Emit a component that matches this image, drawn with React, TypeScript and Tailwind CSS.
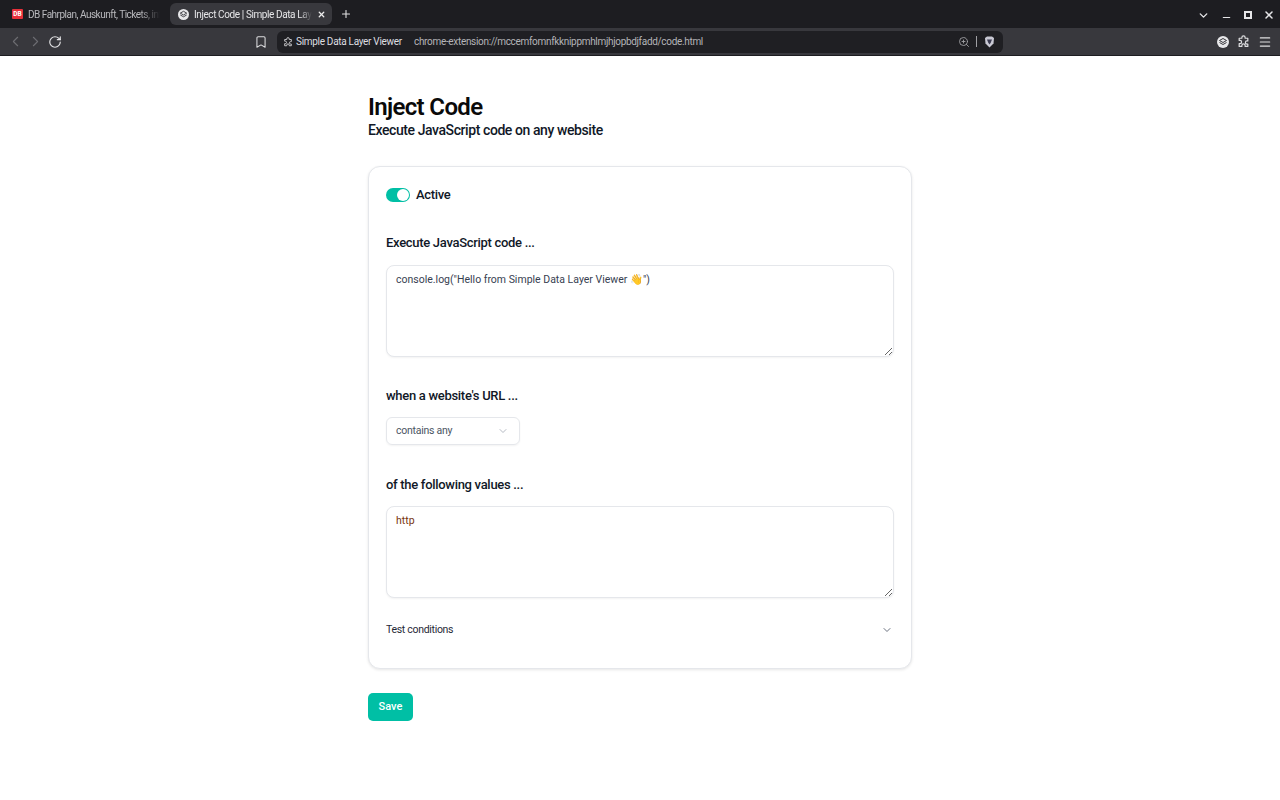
import { ChevronDown, ChevronLeft, ChevronRight, RotateCw, Bookmark, X, Plus, Minus, ZoomIn, Menu } from "lucide-react";

const font = { fontFamily: 'Roboto, "Noto Sans", sans-serif' };

function PuzzleIcon({ size, className = "" }: { size: number; className?: string }) {
  return (
    <svg width={size} height={size} viewBox="0 0 24 24" fill="none" stroke="currentColor" strokeWidth="2.2" strokeLinejoin="round" className={className}>
      <path d="M9 4.500a3 3 0 0 1 6 0V6h5v5h-1.500a3 3 0 0 0 0 6H20v4h-5v-1.500a3 3 0 0 0-6 0V21H4v-5h1.500a3 3 0 0 0 0-6H4V6h5z" />
    </svg>
  );
}

function LayerLogo({ size }: { size: number }) {
  return (
    <svg width={size} height={size} viewBox="0 0 24 24" className="shrink-0">
      <circle cx="12" cy="12" r="12" fill="#e8e8ea" />
      <path d="M12 5l7 4-7 4-7-4z" fill="none" stroke="#38383d" strokeWidth="2" strokeLinejoin="round" />
      <path d="M5 13l7 4 7-4" fill="none" stroke="#38383d" strokeWidth="2" strokeLinejoin="round" />
    </svg>
  );
}

function Tab() {
  return (
    <div className="flex h-[28px] w-[164px] shrink-0 items-center pl-[12px]">
      <div className="flex h-[10px] w-[11px] shrink-0 items-center justify-center rounded-[1px] bg-[#e8303a] text-[6.500px] leading-none font-bold text-white">DB</div>
      <span className="ml-[5px] w-[132px] overflow-hidden whitespace-nowrap text-[10px] tracking-[-0.5px] text-[#b9b9bd] [mask-image:linear-gradient(to_right,black_85%,transparent)]">DB Fahrplan, Auskunft, Tickets, informieren</span>
    </div>
  );
}

function ActiveTab() {
  return (
    <div className="mt-[3px] flex h-[22px] w-[162px] shrink-0 items-center rounded-[6px] bg-[#38383d] pl-[8px]">
      <LayerLogo size={11} />
      <span className="ml-[5px] w-[118px] overflow-hidden whitespace-nowrap text-[10px] tracking-[-0.4px] text-[#e6e6e8] [mask-image:linear-gradient(to_right,black_90%,transparent)]">Inject Code | Simple Data Layer Viewer</span>
      <X size={9} strokeWidth={3.5} className="ml-[5px] text-[#eeeeee]" />
    </div>
  );
}

function Heading({ children, className = "" }: { children: React.ReactNode; className?: string }) {
  return <h2 className={`text-[13px] leading-[18px] font-medium tracking-[-0.3px] text-[#111827] ${className}`}>{children}</h2>;
}

function Area({ value, color, className = "" }: { value: string; color: string; className?: string }) {
  return (
    <textarea
      readOnly
      defaultValue={value}
      style={font}
      className={`block h-[92px] w-full rounded-[8px] border border-[#e5e7eb] bg-white px-[9px] py-[6px] text-[10.500px] leading-[16px] shadow-[0_1px_2px_rgba(0,0,0,0.05)] outline-none ${color} ${className}`}
    />
  );
}

export default function App() {
  return (
    <div style={font} className="flex min-h-[800px] flex-col bg-white">
      <header className="flex h-[28px] items-start bg-[#1d1d21]">
        <Tab />
        <div className="w-[6px]" />
        <ActiveTab />
        <Plus size={12} strokeWidth={2.2} className="ml-[8px] mt-[8px] text-[#e0e0e2]" />
        <div className="ml-auto flex items-center pr-[5px] pt-[7px] text-[#e6e6e8]">
          <ChevronDown size={13} strokeWidth={2.5} />
          <Minus size={11} strokeWidth={2.5} className="ml-[11px] mt-[5px]" />
          <span className="ml-[12px] h-[8px] w-[8px] border-2 border-[#e6e6e8]" />
          <X size={12} strokeWidth={3} className="ml-[11px]" />
        </div>
      </header>
      <nav className="flex h-[28px] items-center border-b border-[#1d1d21] bg-[#38383d]">
        <ChevronLeft size={17} strokeWidth={1.5} className="ml-[7px] text-[#6d6d72]" />
        <ChevronRight size={17} strokeWidth={1.5} className="ml-[3px] text-[#6d6d72]" />
        <RotateCw size={14} strokeWidth={2} className="ml-[4px] text-[#e4e4e6]" />
        <Bookmark size={14} strokeWidth={1.8} className="ml-[192px] text-[#dcdcde]" />
        <div className="ml-[9px] flex h-[22px] w-[726px] items-center rounded-[6px] bg-[#1f1f23] pl-[6px] pr-[6px]">
          <PuzzleIcon size={10} className="shrink-0 text-[#d0d0d2]" />
          <span className="ml-[3px] w-[106px] shrink-0 whitespace-nowrap text-[10px] tracking-[-0.3px] text-[#dedee0]">Simple Data Layer Viewer</span>
          <span className="ml-[12px] whitespace-nowrap text-[10px] tracking-[-0.32px] text-[#b4b4b8]">chrome-extension://mccemfomnfkknippmhlmjhjopbdjfadd/code.html</span>
          <ZoomIn size={12} strokeWidth={1.8} className="ml-auto text-[#9f9fa3]" />
          <span className="ml-[6px] h-[11px] w-px bg-[#a0a0a4]" />
          <svg width="11" height="12" viewBox="0 0 11 12" className="ml-[7px] mr-[2px]">
            <path d="M1 2l2-1.500h5L10 2l-.5 5.500L5.500 11.500 1.500 7.500z" fill="#c9c9d4" />
            <path d="M3 3.500h5L6.800 6.500 5.500 8.500 4.200 6.500z" fill="#3a3a50" />
          </svg>
        </div>
        <div className="ml-auto flex items-center gap-[8px] pr-[8px] text-[#dedee0]">
          <LayerLogo size={12} />
          <PuzzleIcon size={13} />
          <Menu size={14} strokeWidth={2} />
        </div>
      </nav>

      <main className="mx-auto w-[544px] pt-[37px]">
        <h1 className="text-[24px] leading-[28px] font-semibold tracking-[-0.65px] text-[#0a0a0a]">Inject Code</h1>
        <p className="text-[14px] leading-[18px] font-medium tracking-[-0.42px] text-[#111827]">Execute JavaScript code on any website</p>

        <section className="mt-[27px] h-[503px] rounded-[12px] border border-[#e5e7eb] bg-white px-[17px] pt-[19px] shadow-[0_1px_3px_rgba(0,0,0,0.1)]">
          <div className="flex h-[18px] items-center">
            <span className="relative h-[14px] w-[24px] rounded-full bg-[#00bfa5]">
              <span className="absolute right-[1px] top-[1px] h-[12px] w-[12px] rounded-full bg-white" />
            </span>
            <span className="ml-[6px] text-[13px] font-medium tracking-[-0.33px] text-[#111827]">Active</span>
          </div>

          <Heading className="mt-[30px]">Execute JavaScript code ...</Heading>
          <Area className="mt-[13px]" value={'console.log("Hello from Simple Data Layer Viewer 👋")'} color="text-[#374151]" />

          <Heading className="mt-[30px]">when a website's URL ...</Heading>
          <div className="mt-[12px] flex h-[28px] w-[134px] items-center justify-between rounded-[6px] border border-[#e5e7eb] pl-[9px] pr-[10px] shadow-[0_1px_2px_rgba(0,0,0,0.05)]">
            <span className="text-[10.500px] tracking-[-0.25px] text-[#4b5563]">contains any</span>
            <ChevronDown size={12} strokeWidth={1.5} className="text-[#9ca3af]" />
          </div>

          <Heading className="mt-[31px]">of the following values ...</Heading>
          <Area className="mt-[12px]" value="http" color="text-[#78350f]" />

          <div className="mt-[24px] flex h-[16px] items-center justify-between pr-[1px]">
            <span className="text-[10.500px] tracking-[-0.3px] text-[#1f2937]">Test conditions</span>
            <ChevronDown size={12} strokeWidth={2} className="text-[#6b7280]" />
          </div>
        </section>

        <button className="mt-[24px] flex h-[28px] w-[45px] items-center justify-center rounded-[5px] bg-[#00bfa5] text-[11px] font-medium text-white">Save</button>
      </main>
    </div>
  );
}
